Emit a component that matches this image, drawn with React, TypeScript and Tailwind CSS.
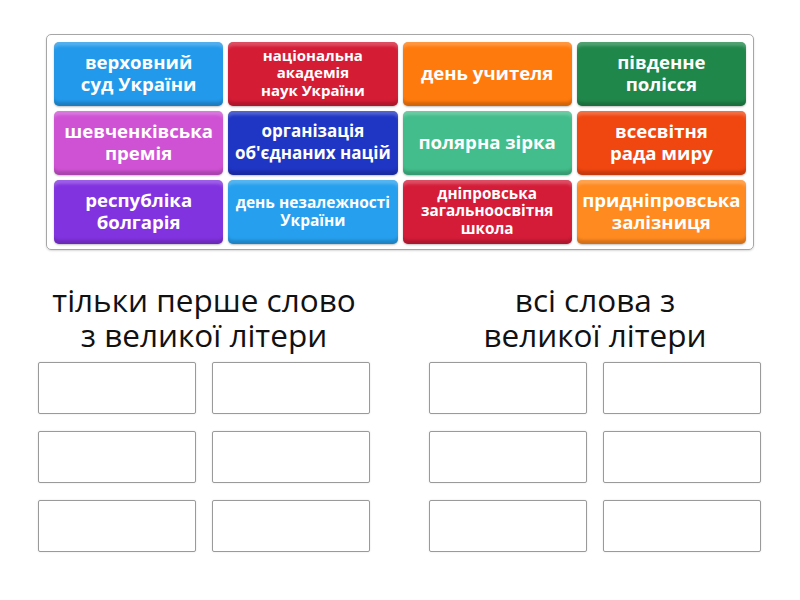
import React from 'react';

type Card = { label: string[]; bg: string; size?: string };

const cards: Card[] = [
  { label: ['верховний', 'суд України'], bg: 'bg-[#2299ea]' },
  { label: ['національна', 'академія', 'наук України'], bg: 'bg-[#d41c35]', size: 'text-[15px] leading-[17.5px]' },
  { label: ['день учителя'], bg: 'bg-[#ff7a0c]' },
  { label: ['південне', 'полісся'], bg: 'bg-[#20874a]' },
  { label: ['шевченківська', 'премія'], bg: 'bg-[#cf52d4]' },
  { label: ['організація', "об'єднаних націй"], bg: 'bg-[#1f35c4]', size: 'text-[17px] leading-[22px]' },
  { label: ['полярна зірка'], bg: 'bg-[#43bd8b]' },
  { label: ['всесвітня', 'рада миру'], bg: 'bg-[#f04610]' },
  { label: ['республіка', 'болгарія'], bg: 'bg-[#8233e0]' },
  { label: ['день незалежності', 'України'], bg: 'bg-[#26a0ee]', size: 'text-[15.5px] leading-[18px]' },
  { label: ['дніпровська', 'загальноосвітня', 'школа'], bg: 'bg-[#d41c38]', size: 'text-[15.3px] leading-[17.5px]' },
  { label: ['придніпровська', 'залізниця'], bg: 'bg-[#ff8a20]' },
];

const Tile: React.FC<{ card: Card }> = ({ card }) => (
  <div
    className={`${card.bg} h-[64px] pb-[2px] rounded-[5px] flex items-center justify-center text-center text-white font-bold shadow-[inset_0_5px_3px_-1px_rgba(255,255,255,0.22),inset_0_-5px_3px_-1px_rgba(0,0,0,0.18),0_1px_2px_rgba(0,0,0,0.25)]`}
  >
    <div className={`${card.size ?? 'text-[18.6px] leading-[22px]'} whitespace-nowrap`}>
      {card.label.map((line, i) => (
        <div key={i}>{line}</div>
      ))}
    </div>
  </div>
);

const DropColumn: React.FC<{ title: string[] }> = ({ title }) => (
  <div className="w-[332px] flex flex-col">
    <div className="h-[80px] text-center text-[31.5px] leading-[35px] text-[#111] whitespace-nowrap">
      {title.map((line, i) => (
        <div key={i}>{line}</div>
      ))}
    </div>
    <div className="grid grid-cols-2 gap-x-[16px] gap-y-[17px]">
      {Array.from({ length: 6 }).map((_, i) => (
        <div
          key={i}
          className="h-[52px] rounded-[2px] border border-[#9a9a9a] bg-white shadow-[0_0_2px_rgba(0,0,0,0.12)]"
        />
      ))}
    </div>
  </div>
);

export default function App() {
  return (
    <div
      className="w-[800px] h-[600px] bg-white overflow-hidden"
      style={{ fontFamily: '"Open Sans", "Noto Sans", sans-serif' }}
    >
      <div className="ml-[46px] mt-[34px] w-[708px] h-[216px] rounded-[5px] border border-[#a6a6a6] p-[7px] shadow-[0_1px_2px_rgba(0,0,0,0.15)]">
        <div className="grid grid-cols-4 gap-x-[5px] gap-y-[5px]">
          {cards.map((c, i) => (
            <Tile key={i} card={c} />
          ))}
        </div>
      </div>

      <div className="flex ml-[38px] mt-[32px] gap-[59px]">
        <DropColumn title={['тільки перше слово', 'з великої літери']} />
        <DropColumn title={['всі слова з', 'великої літери']} />
      </div>
    </div>
  );
}
